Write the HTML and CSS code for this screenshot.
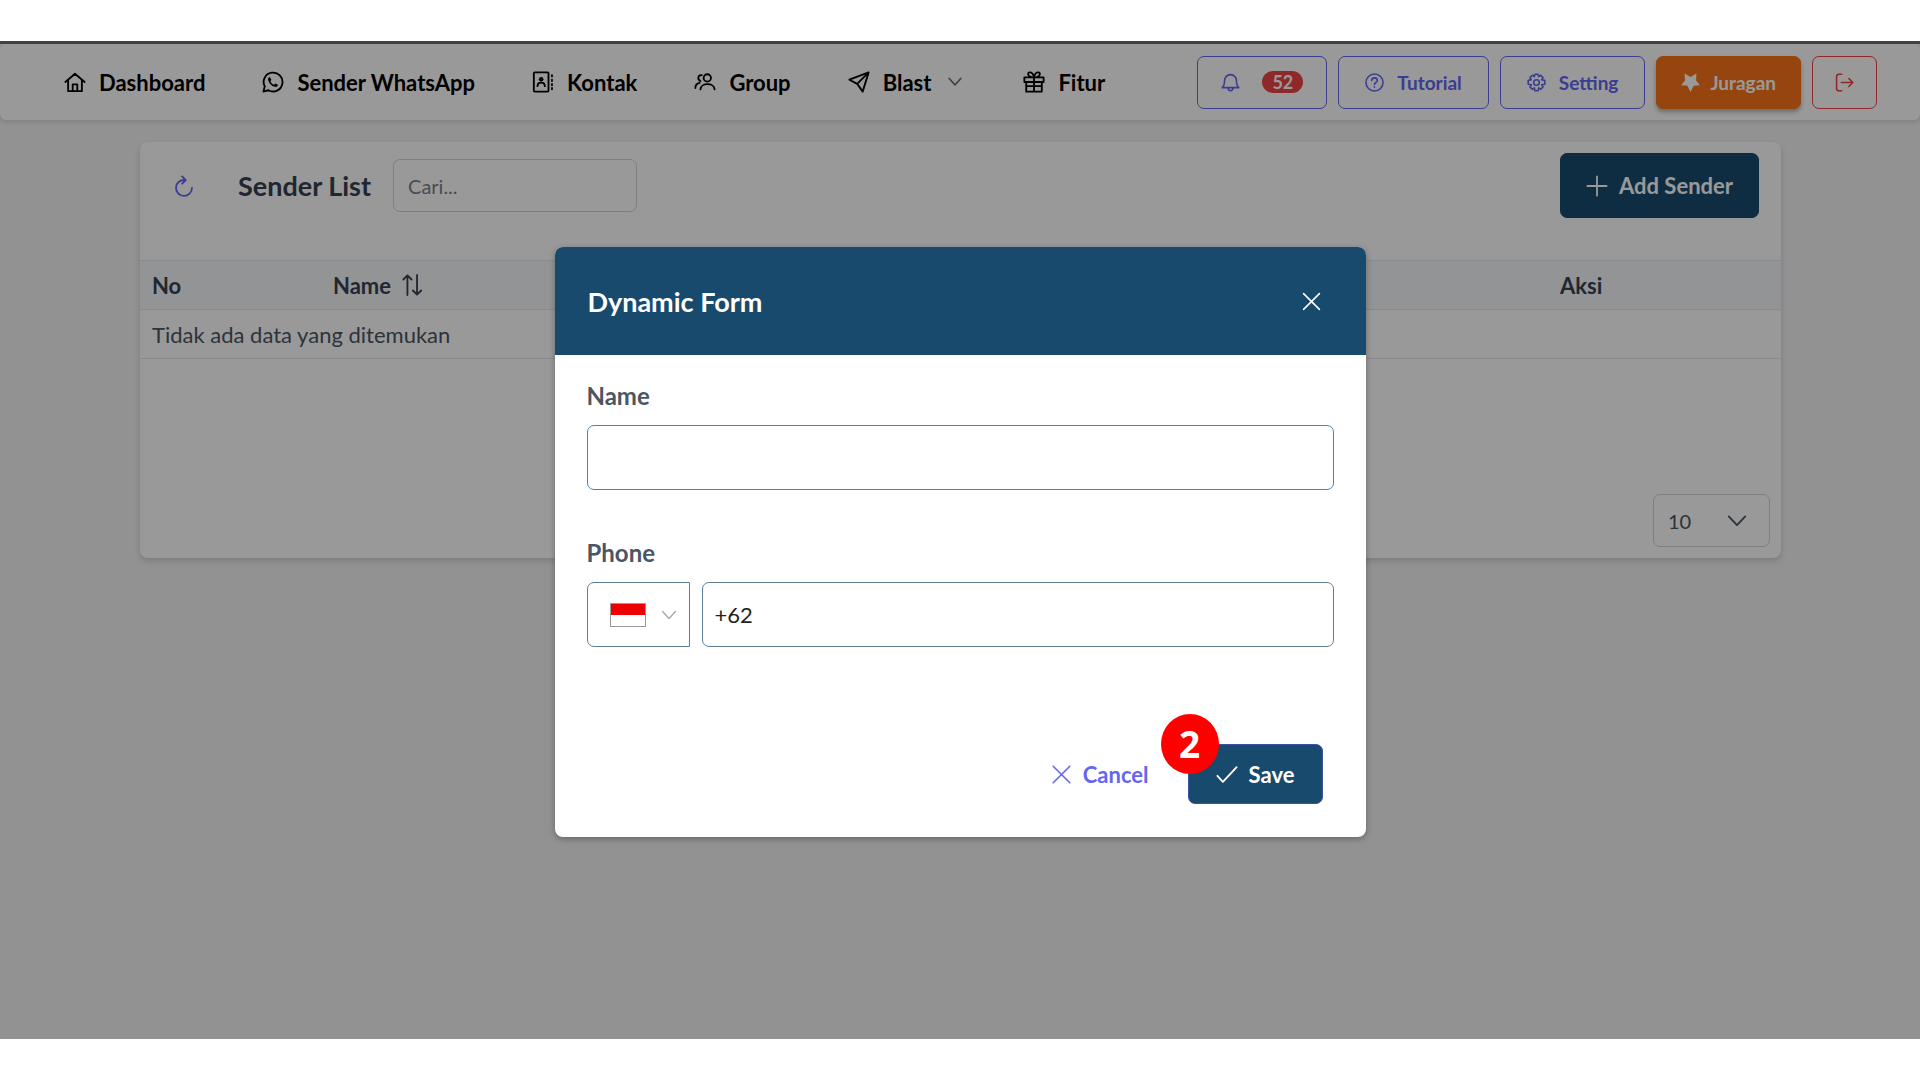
FILE: index.html
```html
<!DOCTYPE html>
<html lang="id">
<head>
<meta charset="utf-8">
<meta name="viewport" content="width=device-width, initial-scale=1">
<title>Sender List</title>
<link rel="stylesheet" href="styles.css">
</head>
<body>
<div class="stage">
  <header class="navbar">
    <nav class="menu" aria-label="Main">
      <a class="menu-link" href="#"><svg class="icon" viewBox="0 0 24 24"><path d="M1.5 12 12 3l10.500 9M4.500 10v12h15V10M9.500 22v-7.500h5V22"/></svg>Dashboard</a>
      <a class="menu-link" href="#"><svg class="icon" viewBox="0 0 24 24"><path d="M1.500 22.500l1.500-5.600A10.300 10.300 0 1 1 7 21z"/><path class="solid" d="M8.300 6.500c-1.500.6-1.900 2-1.500 3.500 1 3.600 3.800 6.300 7.300 7.300 1.800.4 3.200-.5 3.200-2.300l-2.700-1.500-1.400 1.500c-2-.8-3.200-2-4-3.900l1.100-1.500z"/></svg>Sender WhatsApp</a>
      <a class="menu-link" href="#"><svg class="icon" viewBox="0 0 24 24"><rect x="2" y="1.500" width="16" height="21" rx="1"/><circle class="solid" cx="10" cy="9" r="2.500"/><path d="M6 16.500c0-5 8-5 8 0M21.800 4.500v1.500M21.800 9.500V11M21.800 14v1.500M21.800 18.500V20"/></svg>Kontak</a>
      <a class="menu-link" href="#"><svg class="icon" viewBox="0 0 24 24"><circle cx="14.500" cy="7.500" r="4"/><path d="M7 20c.500-7.500 15-7.500 15.500 0M8.500 4.500c-4.500-.500-5 5-1.500 6.500M1.500 18.500c0-3.500 2-5 4.500-5.500"/></svg>Group</a>
      <a class="menu-link" href="#"><svg class="icon" viewBox="0 0 24 24"><path d="M22.500 1.500 16 22.500l-6-8.500-8.500-4.500zM10 14 22.500 1.500"/></svg>Blast<svg class="icon icon-caret" viewBox="0 0 24 24"><path d="m2 6 10 11L22 6"/></svg></a>
      <a class="menu-link" href="#"><svg class="icon" viewBox="0 0 24 24"><path d="M1.500 7h21v5h-21zM3.500 12v10.500h17V12M12 7v15.500M3.500 16.500h17M12 7C5 7 4 1.500 7.500 1.500S12 7 12 7s1-5.500 4.500-5.500S19 7 12 7z"/></svg>Fitur</a>
    </nav>
    <div class="actions">
      <button class="btn btn-outline btn-bell" aria-label="Notifications"><svg class="icon icon-sm" viewBox="0 0 24 24"><path d="M1.500 18.500h21c-3-2.500-3-5-3-9a7.500 7.500 0 0 0-15 0c0 4 0 6.500-3 9zM9 19c0 4.500 6 4.500 6 0"/></svg><span class="count">52</span></button>
      <button class="btn btn-outline"><svg class="icon icon-sm" viewBox="0 0 24 24"><circle cx="12" cy="12" r="10.800"/><path d="M8.500 9.500c0-4.500 7-4.500 7 0 0 2.500-3.500 2.500-3.500 5M12 17.500v.500"/></svg>Tutorial</button>
      <button class="btn btn-outline"><svg class="icon icon-sm" viewBox="0 0 24 24"><circle cx="12" cy="12" r="3.500"/><path d="M10 1.500h4l.7 3 2.600-1.700 3 3-1.800 2.700 4 .8v4.800l-4 .7 1.800 2.800-3 3-2.600-1.800-.7 3.700h-4l-.7-3.700-2.600 1.800-3-3 1.800-2.800-4-.7V9.300l4-.8-1.800-2.700 3-3 2.600 1.700z"/></svg>Setting</button>
      <button class="btn btn-orange"><svg class="icon icon-sm" viewBox="0 0 24 24"><path class="solid" d="M4.500.500 12 5l7.500-4.500-.500 9 5 6-8 .500-4 8-4-8-8-.500 5-6z"/></svg>Juragan</button>
      <button class="btn btn-danger" aria-label="Log out"><svg class="icon icon-sm" viewBox="0 0 24 24"><path d="M8.500 1.500H5Q2 1.500 2 4.500v15q0 3 3 3h3.500M8 12h14.500M17.500 7l5 5-5 5"/></svg></button>
    </div>
  </header>

  <main class="card">
    <div class="toolbar">
      <button class="refresh" aria-label="Refresh"><svg class="icon" viewBox="0 0 24 24"><path d="M13 5.500A8.700 8.700 0 1 0 20.700 14M10 1.500l4 4-4 4"/></svg></button>
      <h1 class="title">Sender List</h1>
      <input class="search" type="search" placeholder="Cari..." aria-label="Cari">
      <button class="btn-navy add"><svg class="icon" viewBox="0 0 24 24"><path d="M12 1.500v21M1.500 12h21"/></svg>Add Sender</button>
    </div>
    <table class="table">
      <colgroup><col class="col-no"><col><col class="col-action"></colgroup>
      <thead>
        <tr><th>No</th><th><span class="sortable">Name<svg class="icon" viewBox="0 0 24 24"><path d="M7 23V2M2.500 6 7 1.500 11.500 6M17.500 1v21M13 18l4.500 4.500L22 18"/></svg></span></th><th>Aksi</th></tr>
      </thead>
      <tbody><tr><td colspan="3">Tidak ada data yang ditemukan</td></tr></tbody>
    </table>
    <div class="paginator">
      <div class="select-wrap">
        <select class="page-size" aria-label="Rows per page"><option>10</option></select>
        <svg class="icon select-caret" viewBox="0 0 24 24"><path d="m3 7 9 9.500L21 7"/></svg>
      </div>
    </div>
  </main>

  <div class="overlay">
    <form class="dialog" role="dialog" aria-labelledby="dialog-title">
      <div class="dialog-head">
        <h2 class="dialog-title" id="dialog-title">Dynamic Form</h2>
        <button class="close" type="button" aria-label="Close"><svg class="icon icon-sm" viewBox="0 0 24 24"><path d="m2 2 20 20M22 2 2 22"/></svg></button>
      </div>
      <div class="dialog-body">
        <div class="field">
          <label for="name">Name</label>
          <input class="input" id="name" type="text">
        </div>
        <div class="field">
          <label for="phone">Phone</label>
          <div class="phone-row">
            <button class="country" type="button" aria-label="Indonesia"><span class="flag"></span><svg class="icon icon-tiny" viewBox="0 0 24 24"><path d="m1 6 11 12L23 6"/></svg></button>
            <input class="input" id="phone" type="tel" value="+62">
          </div>
        </div>
      </div>
      <div class="dialog-foot">
        <button class="cancel" type="button"><svg class="icon icon-sm" viewBox="0 0 24 24"><path d="m1.500 1.500 21 21M22.500 1.500l-21 21"/></svg>Cancel</button>
        <div class="save-wrap">
          <button class="btn-navy save" type="submit"><svg class="icon" viewBox="0 0 24 24"><path d="m1.500 14 6 6.500L22.500 4.500"/></svg>Save</button>
          <span class="step">2</span>
        </div>
      </div>
    </form>
  </div>
</div>
</body>
</html>
```
FILE: styles.css
```css
* { box-sizing: border-box; }

body {
  margin: 0;
  padding: 41px 0;
  min-height: 100vh;
  display: flex;
  flex-direction: column;
  background: #fff;
  font-family: Lato, "Open Sans", sans-serif;
  font-size: 22px;
  color: #4b5563;
}

button, input, select { font: inherit; color: inherit; }
button { cursor: pointer; }

.stage {
  position: relative;
  flex: 1;
  background: #f3f3f6;
  border-top: 3px solid #6b7074;
}

.icon {
  width: 22px;
  height: 22px;
  flex: none;
  fill: none;
  stroke: currentColor;
  stroke-width: 2;
  stroke-linejoin: round;
  stroke-linecap: round;
}
.icon .solid { fill: currentColor; stroke: none; }
.icon-sm { width: 19px; height: 19px; }
.icon-caret { width: 14px; height: 14px; margin: 0 4px; color: #6b7280; stroke-width: 3; }
.icon-tiny { width: 14px; height: 14px; color: #9ca3af; }

/* Top bar */
.navbar {
  display: flex;
  align-items: center;
  justify-content: space-between;
  height: 76px;
  padding: 0 43px 0 64px;
  background: #fff;
  border-radius: 6px;
  box-shadow: 0 2px 4px rgba(0, 0, 0, .12);
}
.menu { display: flex; gap: 57px; }
.menu-link {
  display: flex;
  align-items: center;
  gap: 13px;
  color: #000;
  font-weight: 700;
  text-decoration: none;
}
.actions { display: flex; gap: 11px; }
.btn {
  display: flex;
  align-items: center;
  justify-content: center;
  gap: 13px;
  height: 53px;
  padding: 0 26px;
  border: 1px solid;
  border-radius: 7px;
  background: none;
  font-size: 19px;
  font-weight: 700;
}
.btn-outline { color: #6366f1; }
.btn-bell { gap: 22px; padding: 0 23px; }
.btn-orange {
  padding: 0 24px;
  background: #f97316;
  border-color: #f97316;
  color: #fff;
  gap: 10px;
  box-shadow: 0 3px 4px rgba(0, 0, 0, .3);
}
.btn-danger { width: 65px; color: #ef4444; }
.count {
  padding: 0 10px;
  border-radius: 11px;
  background: #ef4444;
  color: #fff;
  font-size: 18px;
  line-height: 22px;
}

/* Sender table */
.card {
  margin: 22px 139px 0 140px;
  padding-top: 11px;
  background: #fff;
  border-radius: 8px;
  box-shadow: 0 3px 6px rgba(0, 0, 0, .15);
}
.toolbar {
  display: flex;
  align-items: center;
  padding: 0 22px 42px 33px;
}
.refresh {
  display: flex;
  padding: 0;
  margin-right: 43px;
  border: 0;
  background: none;
  color: #6366f1;
}
.title { margin: 0 22px 0 0; color: #374151; font-size: 27px; font-weight: 700; }
.search {
  width: 244px;
  height: 53px;
  padding: 0 14px;
  border: 1px solid #d1d5db;
  border-radius: 7px;
  background: #fff;
  font-size: 20px;
}
.search::placeholder { color: #7b8088; opacity: 1; }
.btn-navy {
  display: flex;
  align-items: center;
  justify-content: center;
  gap: 11px;
  border: 1px solid #184a6e;
  border-radius: 7px;
  background: #184a6e;
  color: #fff;
  font-weight: 700;
}
.add { width: 199px; height: 65px; margin-left: auto; }
.table { width: 100%; border-collapse: collapse; table-layout: fixed; }
.col-no { width: 181px; }
.col-action { width: 233px; }
.table th, .table td {
  height: 49px;
  padding: 0 12px;
  border-bottom: 1px solid #e5e7eb;
  text-align: left;
}
.table th { background: #f4f7f9; border-top: 1px solid #e5e7eb; color: #374151; font-weight: 700; }
.sortable { display: flex; align-items: center; gap: 10px; }
.paginator { display: flex; justify-content: flex-end; padding: 135px 11px 11px; }
.select-wrap { position: relative; }
.page-size {
  appearance: none;
  display: block;
  width: 117px;
  height: 53px;
  padding: 0 14px;
  border: 1px solid #d1d5db;
  border-radius: 7px;
  background: #fff;
  font-size: 20px;
}
.select-caret { position: absolute; right: 22px; top: 16px; pointer-events: none; }

/* Modal */
.overlay {
  position: absolute;
  inset: -3px 0 0;
  display: flex;
  justify-content: center;
  align-items: center;
  padding-top: 4px;
  background: rgba(0, 0, 0, .4);
}
.dialog {
  width: 811px;
  background: #fff;
  border-radius: 8px;
  box-shadow: 0 2px 6px rgba(0, 0, 0, .3);
}
.dialog-head {
  display: flex;
  align-items: center;
  justify-content: space-between;
  height: 108px;
  padding: 0 45px 0 33px;
  border-radius: 8px 8px 0 0;
  background: #184a6e;
  color: #fff;
}
.dialog-title { margin: 0; font-size: 27px; font-weight: 700; }
.close { display: flex; padding: 0; border: 0; background: none; }
.dialog-body { display: grid; gap: 46px; padding: 24px 32px 0; }
.field { display: grid; gap: 12px; }
.field label { font-size: 24px; line-height: 34px; font-weight: 700; }
.input {
  width: 100%;
  height: 65px;
  padding: 0 12px;
  border: 1px solid #5c7f99;
  border-radius: 7px;
  background: #fff;
  color: #222;
}
.phone-row { display: flex; gap: 12px; }
.country {
  display: flex;
  align-items: center;
  gap: 16px;
  width: 103px;
  height: 65px;
  flex: none;
  padding: 0 0 0 22px;
  border: 1px solid #5c7f99;
  border-radius: 7px 0 0 7px;
  background: #fff;
}
.flag {
  width: 36px;
  height: 24px;
  border: 1px solid #999;
  background: linear-gradient(#e00 50%, #fff 50%);
}
.dialog-foot {
  display: flex;
  align-items: center;
  justify-content: flex-end;
  gap: 39px;
  padding: 97px 43px 33px 33px;
}
.cancel {
  display: flex;
  align-items: center;
  gap: 12px;
  padding: 0;
  border: 0;
  background: none;
  color: #6366f1;
  font-weight: 700;
}
.save-wrap { position: relative; }
.save { width: 135px; height: 60px; border-color: #3b52a5; }
.step {
  position: absolute;
  left: -27px;
  top: -30px;
  width: 58px;
  height: 60px;
  border-radius: 50%;
  background: #f00;
  color: #fff;
  font: 700 37px/60px "Open Sans", sans-serif;
  text-align: center;
}
```
